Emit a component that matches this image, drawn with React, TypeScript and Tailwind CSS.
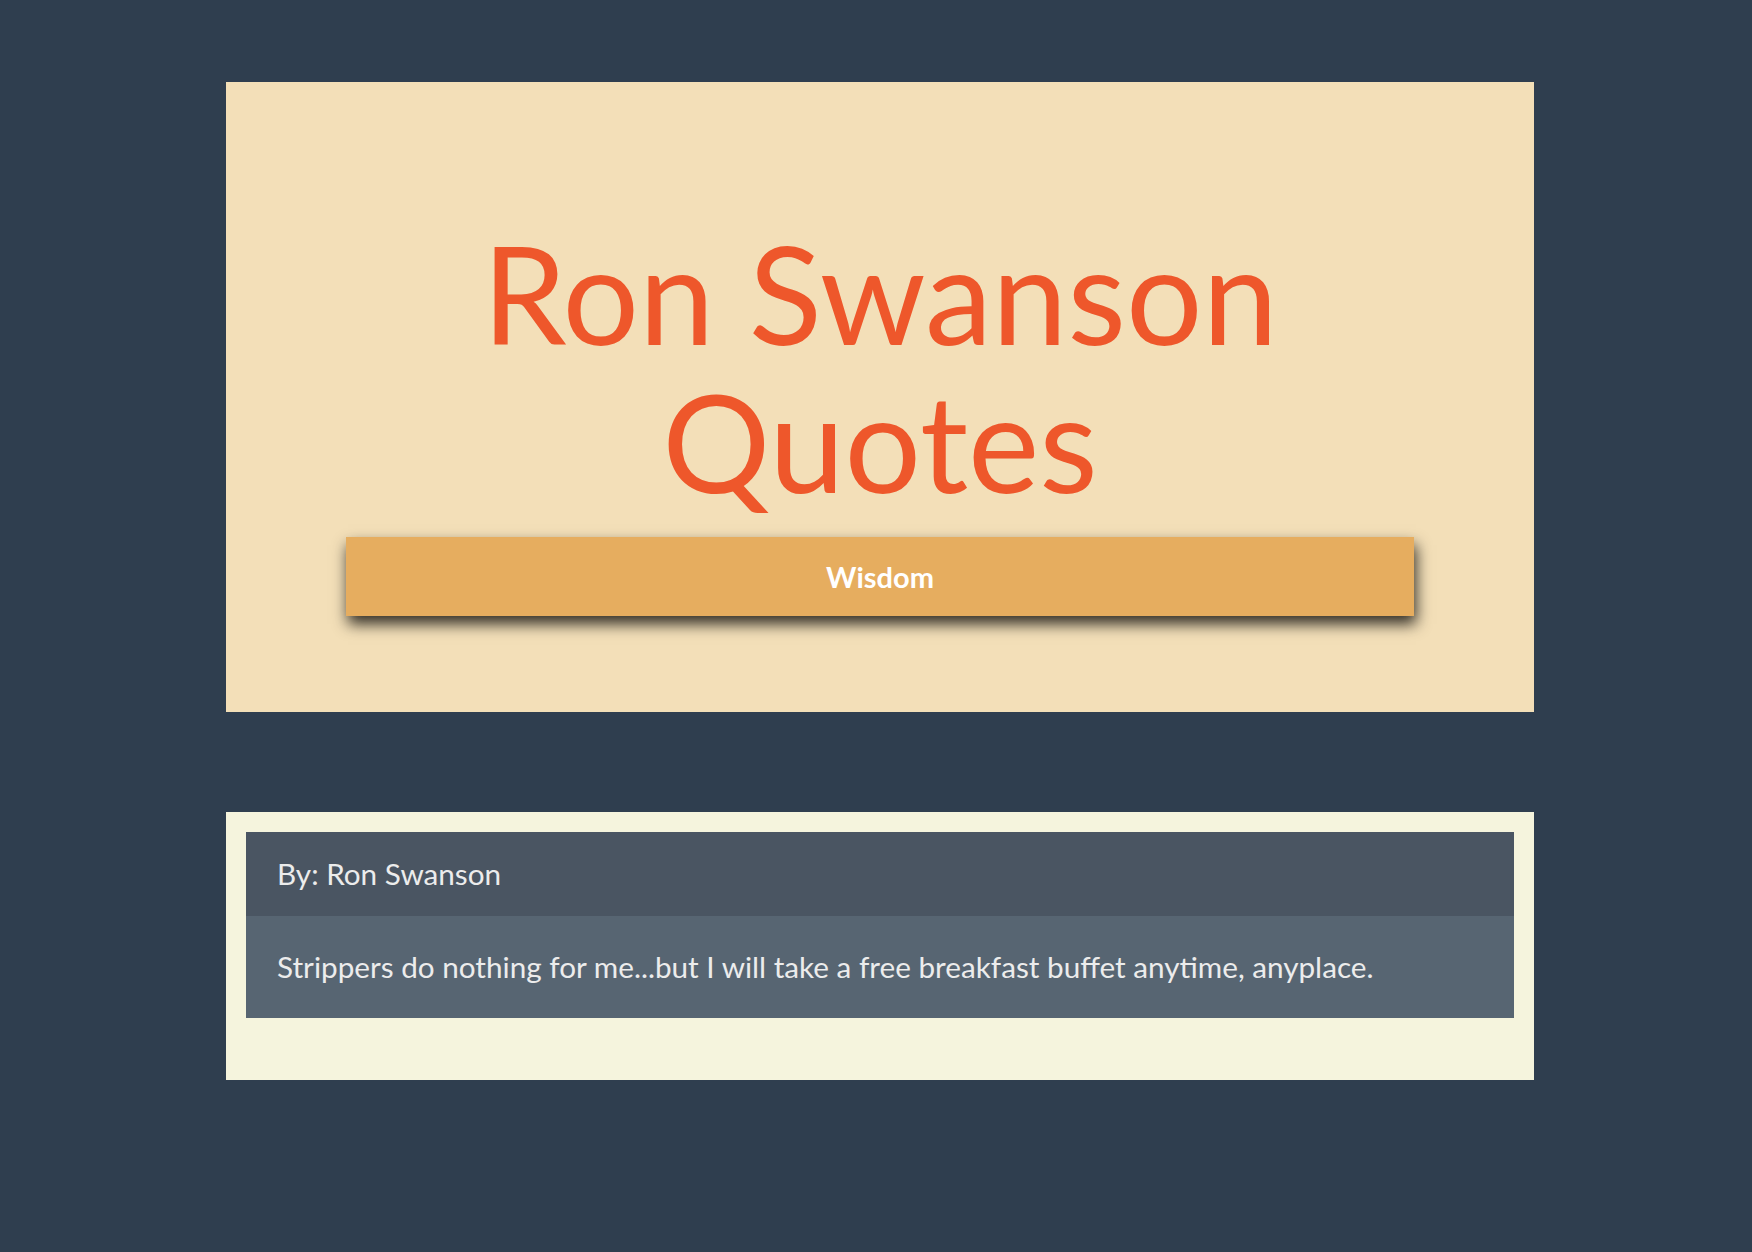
import React from 'react'

const quote = {
    author: 'Ron Swanson',
    text: 'Strippers do nothing for me...but I will take a free breakfast buffet anytime, anyplace.',
}

const App = () => {
    return (
        <div className="w-full min-h-[1252px] bg-[#2f3e4f] pt-[82px] pl-2 font-['Lato',sans-serif]">
            <div className="w-[1308px] mx-auto flex flex-col gap-[100px]">
                {/* header card */}
                <div className="w-full flex flex-col items-center bg-[#f3dfb8] pt-[137px] pb-[96px]">
                    <h1 className="text-center text-[135px] leading-[148px] text-[#ee572b] font-normal">
                        Ron Swanson
                        <br />
                        Quotes
                    </h1>
                    <button className="mt-[22px] w-[1068px] h-[79px] bg-[#e6ad5f] text-white text-[29px] font-bold shadow-[2px_8px_14px_rgba(0,0,0,0.8)]">
                        Wisdom
                    </button>
                </div>

                {/* quote card */}
                <div className="w-full bg-[#f5f4dd] pt-5 px-5 pb-[62px]">
                    <div className="flex flex-col text-[#ececec] text-[29.7px]">
                        <div className="h-[84px] flex items-center px-[31px] bg-[#4a5562]">
                            By: {quote.author}
                        </div>
                        <div className="h-[102px] flex items-center px-[31px] bg-[#576572]">
                            {quote.text}
                        </div>
                    </div>
                </div>
            </div>
        </div>
    )
}

export default App
